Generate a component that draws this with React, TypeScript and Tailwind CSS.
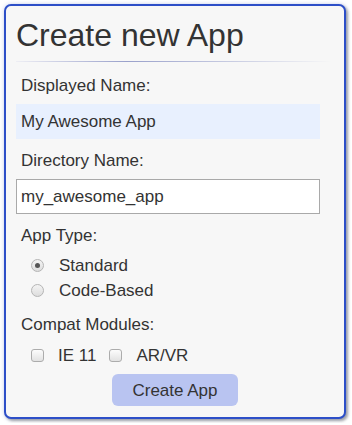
import { useState } from "react";

type RadioProps = { label: string; checked: boolean; onSelect: () => void };

const Radio = ({ label, checked, onSelect }: RadioProps) => (
  <div className="flex h-[25px] items-center pl-[15px]" onClick={onSelect}>
    <div className="flex h-[13px] w-[13px] items-center justify-center rounded-full border border-[#b5b5b5] bg-gradient-to-b from-[#f4f4f4] to-[#dddddd]">
      {checked && <div className="h-[5px] w-[5px] rounded-full bg-[#555]" />}
    </div>
    <span className="ml-[15px]">{label}</span>
  </div>
);

type CheckProps = { label: string; checked: boolean; onToggle: () => void };

const Check = ({ label, checked, onToggle }: CheckProps) => (
  <div className="flex items-center" onClick={onToggle}>
    <div className="flex h-[13px] w-[13px] items-center justify-center rounded-[3px] border border-[#acacac] bg-gradient-to-b from-[#fcfcfc] to-[#e2e2e2] text-[10px] leading-none text-[#444]">
      {checked ? "✓" : ""}
    </div>
    <span className="ml-[14px]">{label}</span>
  </div>
);

export default function App() {
  const [appType, setAppType] = useState("standard");
  const [ie, setIe] = useState(false);
  const [arvr, setArvr] = useState(false);

  return (
    <div className="bg-white pb-1 pl-1 pr-[6px] pt-1 font-['Liberation_Sans',Arial,sans-serif] text-[17px] leading-[20px] text-[#333]">
      <div className="rounded-[7px] border-2 border-[#2d4fc8] bg-[#f7f7f7] pb-[11px] pl-[10px] pr-[10px] pt-[11px] shadow-[0_0_4px_rgba(45,79,200,0.25),2px_2px_3px_rgba(0,0,0,0.35)]">
        <h1 className="text-[32px] leading-[36px] text-[#333]">Create new App</h1>
        {/* title rule, darkest a bit left of centre */}
        <div className="mt-2 h-px w-[316px] bg-gradient-to-r from-[#eeeef4] via-[#9aa1cb] via-35% to-[#f7f7f7]" />

        <label className="mt-[14px] block pl-[5px]">Displayed Name:</label>
        <div className="mt-2 flex h-[35px] w-[304px] items-center bg-[#e8f0fe] pl-[5px] leading-[19px]">
          My Awesome App
        </div>

        <label className="mt-3 block pl-[5px]">Directory Name:</label>
        <div className="mt-2 flex h-[35px] w-[304px] items-center border border-[#a9a9a9] bg-white pl-1 leading-[19px]">
          my_awesome_app
        </div>

        <div className="mt-3 pl-[5px]">App Type:</div>
        <div className="mt-[7px] flex flex-col">
          <Radio label="Standard" checked={appType === "standard"} onSelect={() => setAppType("standard")} />
          <Radio label="Code-Based" checked={appType === "code"} onSelect={() => setAppType("code")} />
        </div>

        <div className="mt-3 pl-[5px]">Compat Modules:</div>
        <div className="mt-2 flex h-[25px] items-center gap-[13px] pl-[15px]">
          <Check label="IE 11" checked={ie} onToggle={() => setIe(!ie)} />
          <Check label="AR/VR" checked={arvr} onToggle={() => setArvr(!arvr)} />
        </div>

        <div className="mt-[6px] flex justify-center">
          <button className="h-8 w-[126px] rounded-[6px] bg-[#b9c4f1] leading-[19px] text-[#333]">
            Create App
          </button>
        </div>
      </div>
    </div>
  );
}
